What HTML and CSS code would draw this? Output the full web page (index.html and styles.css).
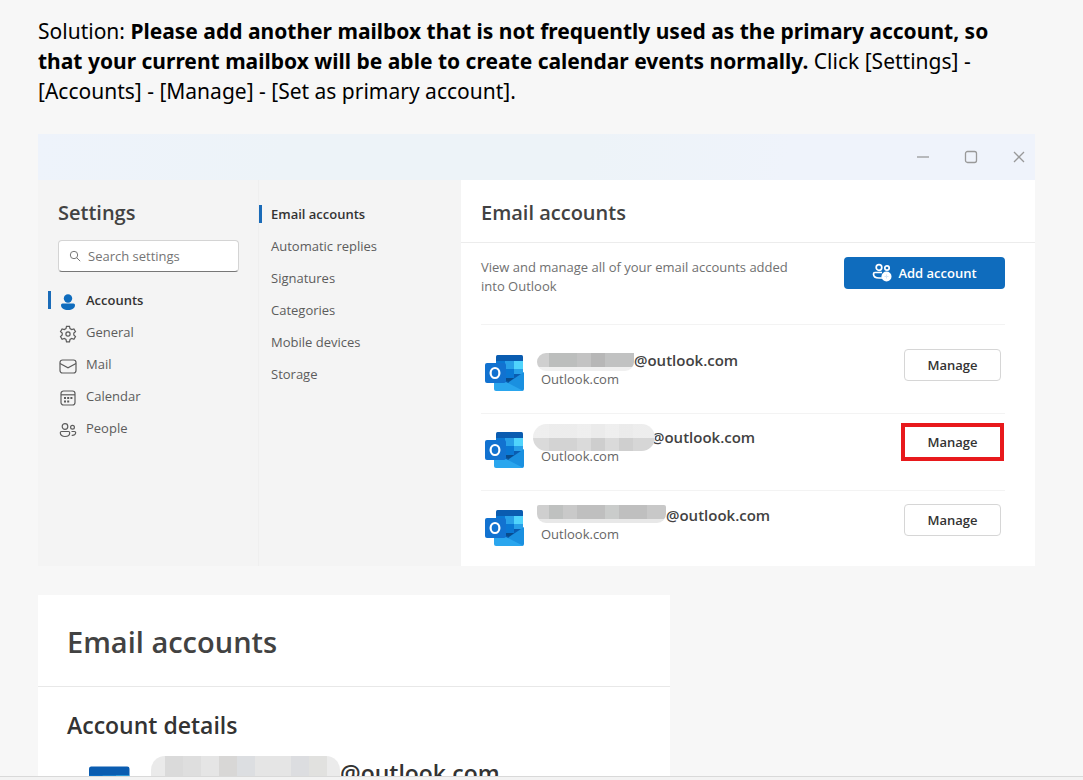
FILE: index.html
```html
<!DOCTYPE html>
<html lang="en">
<head>
<meta charset="utf-8">
<title>Primary account</title>
<link rel="stylesheet" href="styles.css">
</head>
<body>
<svg class="sprite" aria-hidden="true">
  <symbol id="outlook" viewBox="0 0 40 38">
    <rect x="12" y="1" width="27" height="35" rx="1.500" fill="#0a5cb0"/>
    <path d="M12 7h9v9h-9z" fill="#0a78d4"/>
    <path d="M21 7h9v8h-9z" fill="#28a0e8"/>
    <path d="M30 7h9v8h-9z" fill="#50d4fc"/>
    <path d="M12 15h9v11h-9z" fill="#0868bc"/>
    <path d="M21 15h9v9h-9z" fill="#0a78d4"/>
    <path d="M30 15h9v5h-9z" fill="#28a0e8"/>
    <path d="M21 24h9l-5 4-4-2z" fill="#0a4c8c"/>
    <path d="M40 18v17q0 2-2 2H20l5-9z" fill="#1a90e0"/>
    <path d="M10 24l12 4 17 8.700-1 .3H12q-2 0-2-2z" fill="#2aa6ee"/>
    <rect x="1" y="9" width="21" height="20" rx="2" fill="#1272d0"/>
    <ellipse cx="11" cy="19" rx="4.400" ry="5" fill="none" stroke="#fff" stroke-width="2.200"/>
  </symbol>
  <symbol id="people" viewBox="0 0 18 18">
    <g fill="none" stroke="currentColor" stroke-width="1.200">
      <circle cx="6" cy="5.500" r="2.800"/><circle cx="13.500" cy="6.300" r="1.900"/>
      <path d="M2.500 10.500h7q1.200 0 1.200 1.200c0 2.500-2 3.800-4.700 3.800s-4.700-1.300-4.700-3.800q0-1.200 1.200-1.200zM12.500 10.500h3q1.200 0 1.200 1c0 2-1.600 3-4 2.800"/>
    </g>
  </symbol>
</svg>

<main class="page">
  <p class="solution">Solution: <strong>Please add another mailbox that is not frequently used as the primary account, so that your current mailbox will be able to create calendar events normally.</strong> Click [Settings] - [Accounts] - [Manage] - [Set as primary account].</p>

  <section class="window">
    <header class="titlebar">
      <button class="winbtn" aria-label="Minimize"><svg viewBox="0 0 14 14"><path d="M1 7h12"/></svg></button>
      <button class="winbtn" aria-label="Maximize"><svg viewBox="0 0 14 14"><rect x="1.500" y="1.500" width="11" height="11" rx="2"/></svg></button>
      <button class="winbtn" aria-label="Close"><svg viewBox="0 0 14 14"><path d="M2 2l10 10M12 2L2 12"/></svg></button>
    </header>
    <div class="panes">
      <aside class="sidebar">
        <h2 class="title">Settings</h2>
        <label class="search">
          <svg viewBox="0 0 12 12"><circle cx="5" cy="5" r="3.700"/><path d="M7.700 7.700l3.500 3.500"/></svg>
          <input type="text" placeholder="Search settings" aria-label="Search settings">
        </label>
        <nav class="nav">
          <a class="nav-item current" href="#accounts"><svg viewBox="0 0 18 18"><circle cx="9" cy="5.500" r="4.200" fill="currentColor"/><path d="M3.500 10.500h11q1.500 0 1.500 1.500c0 3.300-3 5-7 5s-7-1.700-7-5q0-1.500 1.500-1.500z" fill="currentColor"/></svg>Accounts</a>
          <a class="nav-item" href="#general"><svg viewBox="0 0 18 18" class="line"><path d="M7.500 1.300h3l.5 2.300 1.700 1 2.200-.7 1.600 2.700-1.700 1.500v1.900l1.700 1.500-1.600 2.700-2.200-.7-1.700 1-.5 2.300h-3L7 14.500l-1.700-1-2.200.7-1.600-2.700L3.200 10V8.100L1.500 6.600l1.600-2.700 2.200.7 1.700-1z"/><circle cx="9" cy="9" r="2.100"/></svg>General</a>
          <a class="nav-item" href="#mail"><svg viewBox="0 0 18 18" class="line"><rect x="1" y="3" width="16" height="13" rx="2.500"/><path d="M1 6.500l8 4.300 8-4.300"/></svg>Mail</a>
          <a class="nav-item" href="#calendar"><svg viewBox="0 0 18 18" class="line"><rect x="2" y="2" width="14" height="14" rx="2.500"/><path d="M2 5.800h14"/><path d="M5 9h2M8.200 9h2M11.400 9h2M5 12.500h2M8.200 12.500h2" stroke-width="2"/></svg>Calendar</a>
          <a class="nav-item" href="#people"><svg><use href="#people"/></svg>People</a>
        </nav>
      </aside>
      <nav class="subnav">
        <a class="sub-item current" href="#email">Email accounts</a>
        <a class="sub-item" href="#replies">Automatic replies</a>
        <a class="sub-item" href="#signatures">Signatures</a>
        <a class="sub-item" href="#categories">Categories</a>
        <a class="sub-item" href="#mobile">Mobile devices</a>
        <a class="sub-item" href="#storage">Storage</a>
      </nav>
      <div class="content">
        <h2 class="title content-title">Email accounts</h2>
        <div class="content-body">
          <div class="intro">
            <p class="intro-text">View and manage all of your email accounts added into Outlook</p>
            <button class="add"><svg viewBox="0 0 20 20"><g fill="none" stroke="currentColor" stroke-width="1.700"><circle cx="7" cy="4.500" r="2.800"/><circle cx="15" cy="5" r="2.200"/><path d="M10 9.500H3q-1.500 0-1.500 1.500c0 2.500 2 4 5.500 4h3"/></g><circle cx="14.500" cy="13.500" r="5" fill="currentColor"/><path d="M12.500 13.500h4M14.500 11.500v4" stroke="#d3e5f6" stroke-width="1"/></svg>Add account</button>
          </div>
          <ul class="accounts">
            <li class="account">
              <svg class="logo"><use href="#outlook"/></svg>
              <div class="who"><div class="address"><span class="mask mask-a"></span>@outlook.com</div><div class="provider">Outlook.com</div></div>
              <button class="manage">Manage</button>
            </li>
            <li class="account">
              <svg class="logo"><use href="#outlook"/></svg>
              <div class="who"><div class="address"><span class="mask mask-b"></span>@outlook.com</div><div class="provider">Outlook.com</div></div>
              <button class="manage marked">Manage</button>
            </li>
            <li class="account">
              <svg class="logo"><use href="#outlook"/></svg>
              <div class="who"><div class="address"><span class="mask mask-c"></span>@outlook.com</div><div class="provider">Outlook.com</div></div>
              <button class="manage">Manage</button>
            </li>
          </ul>
        </div>
      </div>
    </div>
  </section>

  <section class="details">
    <h2 class="details-title">Email accounts</h2>
    <div class="details-body">
      <h3 class="details-heading">Account details</h3>
      <div class="details-row">
        <svg class="logo-large"><use href="#outlook"/></svg>
        <div class="details-address"><span class="mask mask-d"></span>@outlook.com</div>
      </div>
    </div>
  </section>
</main>
<footer class="edge"></footer>
</body>
</html>
```
FILE: styles.css
```css
* { box-sizing: border-box; }

body {
  margin: 0;
  height: 100vh;
  display: flex;
  flex-direction: column;
  background: #f7f7f7;
  color: #424242;
  font: 13px/20px "Open Sans", "Noto Sans", sans-serif;
}

h2, h3, p, ul { margin: 0; padding: 0; }
a { color: inherit; text-decoration: none; }
button, input { font: inherit; color: inherit; }

.sprite { display: none; }

.page {
  flex: 1;
  min-height: 0;
  overflow: hidden;
  padding: 16px 48px 0 38px;
}

.edge {
  height: 4px;
  background: #f3f3f3;
  border-top: 1px solid #d9d9d9;
}

.solution {
  color: #000;
  font-family: "Noto Sans", sans-serif;
  font-size: 21px;
  line-height: 30px;
  margin-bottom: 28px;
}

.window { background: #f4f4f4; }

.titlebar {
  display: flex;
  justify-content: flex-end;
  align-items: center;
  gap: 34px;
  height: 46px;
  padding-right: 9px;
  background: linear-gradient(100deg, #eef3fb, #edf3f8 25%, #edf3f8 55%, #eff3fb 75%);
}

.winbtn {
  display: flex;
  padding: 0;
  border: 0;
  background: none;
}

.winbtn svg {
  width: 14px;
  height: 14px;
  fill: none;
  stroke: #999;
  stroke-width: 1.3;
}

.panes { display: flex; }

.sidebar {
  width: 221px;
  padding: 18px 19px 0 10px;
  border-right: 1px solid #efefef;
}

.title {
  font-size: 20px;
  line-height: 30px;
  font-weight: 600;
}

.sidebar .title { padding-left: 10px; }

.search {
  display: flex;
  align-items: center;
  gap: 7px;
  height: 32px;
  margin: 12px 0 12px 10px;
  padding: 0 10px;
  background: #fff;
  border: 1px solid #d4d4d4;
  border-bottom-color: #777;
  border-radius: 4px;
}

.search svg {
  flex: none;
  width: 12px;
  height: 12px;
  fill: none;
  stroke: #777;
}

.search input {
  width: 100%;
  min-width: 0;
  padding: 0;
  border: 0;
  outline: 0;
  background: none;
}

.search input::placeholder { color: #757575; opacity: 1; }

.nav-item {
  display: flex;
  align-items: center;
  gap: 9px;
  height: 32px;
  padding-left: 8px;
  border-left: 3px solid transparent;
  color: #5c5c5c;
}

.nav-item svg {
  width: 18px;
  height: 18px;
  margin-top: 3px;
}

.line { fill: none; stroke: currentColor; stroke-width: 1.2; }

.nav .current,
.subnav .current {
  color: #333;
  font-weight: 600;
  border-image: linear-gradient(transparent 25%, #1a6bb8 25%, #1a6bb8 75%, transparent 75%) 1;
}

.nav .current svg { color: #0f6cbd; }

.subnav {
  width: 202px;
  padding-top: 18px;
}

.sub-item {
  display: flex;
  align-items: center;
  height: 32px;
  padding-left: 9px;
  border: 0 solid transparent;
  border-left-width: 3px;
  color: #5c5c5c;
}

.content {
  flex: 1;
  background: #fff;
}

.content-title {
  padding: 18px 20px 14px;
  border-bottom: 1px solid #ececec;
}

.content-body { padding: 14px 30px 0 20px; }

.intro {
  display: flex;
  justify-content: space-between;
  align-items: flex-start;
  padding-bottom: 27px;
  border-bottom: 1px solid #f3f3f3;
}

.intro-text {
  max-width: 325px;
  line-height: 19px;
  padding: 1px 0;
  color: #707070;
}

.add {
  display: flex;
  align-items: center;
  justify-content: center;
  gap: 6px;
  width: 161px;
  height: 32px;
  padding: 0;
  border: 0;
  border-radius: 4px;
  background: #0f6cbd;
  color: #fff;
  font-weight: 600;
}

.add svg { width: 20px; height: 20px; }

.accounts {
  list-style: none;
  padding-top: 12px;
}

.account {
  display: flex;
  align-items: flex-start;
  padding: 12px 4px 32px 3px;
  border-bottom: 1px solid #f3f3f3;
}

.account:last-child { padding: 13px 4px 30px 3px; border: 0; }

.logo {
  width: 40px;
  height: 38px;
  margin: 5px 13px -11px 0;
}

.who { flex: 1; height: 32px; }

.address {
  display: flex;
  align-items: center;
  height: 22px;
  font-size: 15px;
  font-weight: 600;
}

.provider {
  padding-left: 4px;
  line-height: 16px;
  color: #666;
}

.mask { flex: none; z-index: 1; }

.mask-a {
  width: 97px;
  height: 18px;
  margin-top: 4px;
  border-radius: 9px 0 9px 9px;
  background:
    linear-gradient(#0000 14px, #f0f0f0 14px),
    linear-gradient(90deg, #cfcfcf 12px, #bcbebd 12px 40px, #c3c3c3 40px 54px, #b7b7b7 54px 68px, #c1c2c2 68px);
}

.mask-b {
  width: 122px;
  height: 27px;
  margin: 0 -4px 0 -4px;
  border-radius: 14px;
  background:
    linear-gradient(#f8f8f8b0 14px, #0000 14px),
    linear-gradient(90deg, #dadada 16px, #d3d3d3 16px 44px, #dadada 44px 58px, #cecece 58px 72px, #dadada 72px 86px, #cfcfcf 86px 100px, #d6d6d6 100px);
}

.mask-c {
  width: 129px;
  height: 18px;
  margin-top: -2px;
  border-radius: 2px 2px 9px 9px;
  background:
    linear-gradient(#0000 14px, #e8e8e8 14px),
    linear-gradient(90deg, #cfcfcf 12px, #bfc1c0 12px 26px, #c9c9c9 26px 40px, #bfbfbf 40px 68px, #cacccb 68px 82px, #bfbfbf 82px 110px, #c8c8c8 110px);
}

.manage {
  width: 97px;
  height: 32px;
  padding: 0;
  border: 1px solid #d6d6d6;
  border-radius: 4px;
  background: #fff;
  color: #333;
  font-weight: 600;
}

.marked {
  border-radius: 0;
  outline: 4px solid #e8191c;
  outline-offset: -1px;
}

.details {
  max-width: 632px;
  margin-top: 29px;
  background: #fff;
}

.details-title {
  padding: 28px 29px 25px;
  font-size: 29px;
  line-height: 38px;
  font-weight: 600;
  border-bottom: 1px solid #e8e8e8;
}

.details-body { padding: 21px 29px; }

.details-heading {
  font-size: 23px;
  line-height: 34px;
  font-weight: 600;
  color: #333;
}

.details-row {
  display: flex;
  align-items: flex-start;
  padding-top: 15px;
}

.logo-large {
  width: 60px;
  height: 57px;
  margin: 8px 20px 0 4px;
}

.mask-d {
  width: 189px;
  height: 34px;
  border-radius: 14px;
  background: linear-gradient(90deg, #eaeaea 14px, #dadada 14px 32px, #dedede 32px 50px, #e5e5e5 50px 68px, #d8d7d6 68px 86px, #dcdee1 86px 104px, #e5e5e5 104px 140px, #dcdde0 140px 158px, #e1e1df 158px 176px, #ebebeb 176px);
}

.details-address {
  display: flex;
  align-items: center;
  height: 32px;
  font-size: 23px;
  font-weight: 600;
  color: #333;
}
```
